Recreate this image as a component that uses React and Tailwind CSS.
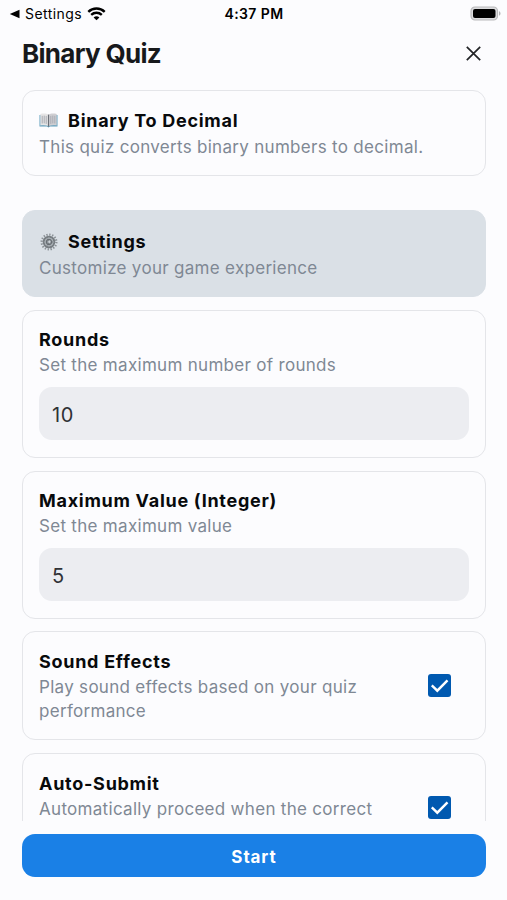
import { useState } from "react";
import clsx from "clsx";

const fields = [
  { id: "rounds", title: "Rounds", description: "Set the maximum number of rounds" },
  { id: "max", title: "Maximum Value (Integer)", description: "Set the maximum value" },
];

const toggles = [
  {
    id: "sound",
    title: "Sound Effects",
    description: "Play sound effects based on your quiz performance",
  },
  {
    id: "auto",
    title: "Auto-Submit",
    description: "Automatically proceed when the correct",
  },
];

function BookIcon() {
  return (
    <svg width="19" height="15" viewBox="0 0 19 15">
      <path d="M.5 2h18v11.5h-7.6L9.5 14.6l-1.4-1.1H.5z" fill="#5f9dbb" />
      <path d="M1.3.9C4 .2 7.6.2 9.5 1.6v11.5C7 12 4 12 1.3 12.5z" fill="#e6e5e6" />
      <path d="M17.7.9C15 .2 11.4.2 9.5 1.6v11.5c2.5-1.1 5.5-1.1 8.2-.6z" fill="#cfced2" />
      <path
        d="M3.2 2.8v7.7M5.2 2.6v7.8M7.2 2.9v8M11.8 2.9v8M13.8 2.6v7.8M15.8 2.8v7.7"
        stroke="#a9abb2"
        strokeWidth="1"
      />
      <path d="M9.5 1.6v12" stroke="#6b6f77" strokeWidth="1.2" />
    </svg>
  );
}

function GearIcon() {
  return (
    <svg width="18" height="18" viewBox="0 0 18 18" fill="none">
      <circle cx="9" cy="9" r="7.4" stroke="#8b9196" strokeWidth="2.2" strokeDasharray="1.35 1.556" />
      <circle cx="9" cy="9" r="5.3" stroke="#777d82" strokeWidth="2" />
      <circle cx="9" cy="9" r="4.3" fill="#a4abb0" />
      <circle cx="9" cy="9" r="2.7" fill="#8b9297" stroke="#666c71" strokeWidth="1" />
      <path d="M9.5 9H13M9 9.5l-2 3M9 8.5l-2-3" stroke="#6c7277" strokeWidth=".8" />
      <circle cx="9.4" cy="8.8" r="1.2" fill="#cdd3d8" />
    </svg>
  );
}

function StatusBar() {
  return (
    <div className="grid h-7 grid-cols-3 items-center pr-[6px] pl-[9px] text-black">
      <div className="flex items-center">
        <svg width="11" height="10" viewBox="0 0 11 10">
          <path d="M10.5.7v8.6L.8 5z" fill="currentColor" />
        </svg>
        <span className="ml-[5px] text-[14px] leading-none tracking-[0.45px]">Settings</span>
        <svg className="ml-[5px]" width="19" height="14" viewBox="0 0 19 14" fill="none">
          <path d="M1.3 4.8c4.6-4.5 11.8-4.5 16.4 0" stroke="currentColor" strokeWidth="2.4" />
          <path d="M4.2 7.9c3-2.9 7.6-2.9 10.6 0" stroke="currentColor" strokeWidth="2.3" />
          <path d="M9.5 13.3 6.6 10.4c1.7-1.5 4.1-1.5 5.8 0z" fill="currentColor" />
        </svg>
      </div>
      <span className="-ml-[2px] text-center text-[14px] leading-none font-semibold tracking-[0.4px]">4:37 PM</span>
      <svg className="justify-self-end" width="31" height="16" viewBox="0 0 31 16">
        <rect x="1" y="1" width="26.5" height="13" rx="4" fill="#dcdcde" stroke="#b9b9bb" strokeWidth="1.2" />
        <rect x="3" y="3" width="22.5" height="9" rx="2" fill="#000" />
        <path d="M29 5.3c2 .7 2 3.7 0 4.4z" fill="#b4b4b6" />
      </svg>
    </div>
  );
}

function Card({ className, children }) {
  return (
    <section className={clsx("shrink-0 rounded-[13px] border px-[17px]", className)}>{children}</section>
  );
}

function CardText({ icon, title, children }) {
  return (
    <div className="-ml-px">
      <h2
        className={clsx(
          "flex items-center text-[18px] font-bold tracking-[0.72px] whitespace-nowrap text-[#080a0c]",
          icon ? "mb-px h-[27px]" : "mb-px h-[25px]"
        )}
      >
        {icon && <span className="mr-[10px] flex w-[19px] justify-center">{icon}</span>}
        {title}
      </h2>
      <p className="text-[17px] leading-[24.5px] tracking-[0.3px] text-[#7f8894]">{children}</p>
    </div>
  );
}

function Checkbox({ checked, onChange, label }) {
  return (
    <button
      type="button"
      role="checkbox"
      aria-checked={checked}
      aria-label={label}
      onClick={onChange}
      className={clsx(
        "flex size-[23px] shrink-0 items-center justify-center self-center rounded-[3px]",
        checked ? "bg-[#0059b0]" : "border-2 border-[#7f8894]"
      )}
    >
      {checked && (
        <svg width="23" height="23" viewBox="0 0 23 23" fill="none">
          <path d="m3.8 11.4 5.5 5.3L19.5 6.4" stroke="#fff" strokeWidth="2.4" />
        </svg>
      )}
    </button>
  );
}

export default function App() {
  const [values, setValues] = useState({ rounds: "10", max: "5" });
  const [enabled, setEnabled] = useState({ sound: true, auto: true });

  return (
    <div className="flex h-screen w-full flex-col overflow-hidden bg-[#fcfcfe] font-['Inter',sans-serif]">
      <StatusBar />

      <header className="flex h-[50px] shrink-0 items-center justify-between pr-[26px] pl-[22px]">
        <h1 className="pt-[2px] text-[26px] leading-none font-bold tracking-[-0.7px] text-[#17191c]">Binary Quiz</h1>
        <button type="button" aria-label="Close">
          <svg width="15" height="15" viewBox="0 0 15 15" fill="none">
            <path d="m.8.8 13.4 13.4M14.2.8.8 14.2" stroke="#222426" strokeWidth="1.7" />
          </svg>
        </button>
      </header>

      <main className="flex min-h-0 flex-1 flex-col overflow-hidden pt-[12px] pr-[21px] pl-[22px]">
        <Card className="h-[86px] border-[#e4e5e9] pt-[16px]">
          <CardText icon={<BookIcon />} title="Binary To Decimal">
            This quiz converts binary numbers to decimal.
          </CardText>
        </Card>

        <Card className="mt-[34px] h-[87px] border-[#dae0e6] bg-[#dae0e6] pt-[17px]">
          <CardText icon={<GearIcon />} title="Settings">
            Customize your game experience
          </CardText>
        </Card>

        {fields.map((field) => (
          <Card key={field.id} className="mt-[13px] h-[148px] border-[#e4e5e9] pt-[16px]">
            <CardText title={field.title}>{field.description}</CardText>
            <div className="-mx-px pt-[9.5px]">
              <input
                aria-label={field.title}
                value={values[field.id]}
                onChange={(e) => setValues({ ...values, [field.id]: e.target.value })}
                className="block h-[53px] w-full rounded-[13px] bg-[#ecedf1] px-[13px] pt-[2px] text-[20px] tracking-[0.5px] text-[#303236] outline-none"
              />
            </div>
          </Card>
        ))}

        <div className="flex flex-col gap-[13px] pt-[12px]">
          {toggles.map((item) => (
            <Card key={item.id} className="flex h-[109px] justify-between border-[#e4e5e9] pr-[34px]">
              <div className="w-[350px] pt-[16.5px]">
                <CardText title={item.title}>{item.description}</CardText>
              </div>
              <Checkbox
                label={item.title}
                checked={enabled[item.id]}
                onChange={() => setEnabled({ ...enabled, [item.id]: !enabled[item.id] })}
              />
            </Card>
          ))}
        </div>
      </main>

      <footer className="shrink-0 pt-[13px] pr-[21px] pb-[23px] pl-[22px]">
        <button
          type="button"
          className="h-[43px] w-full rounded-[13px] bg-[#1a80e6] pt-[4px] text-[17px] font-bold tracking-[0.9px] text-white"
        >
          Start
        </button>
      </footer>
    </div>
  );
}
